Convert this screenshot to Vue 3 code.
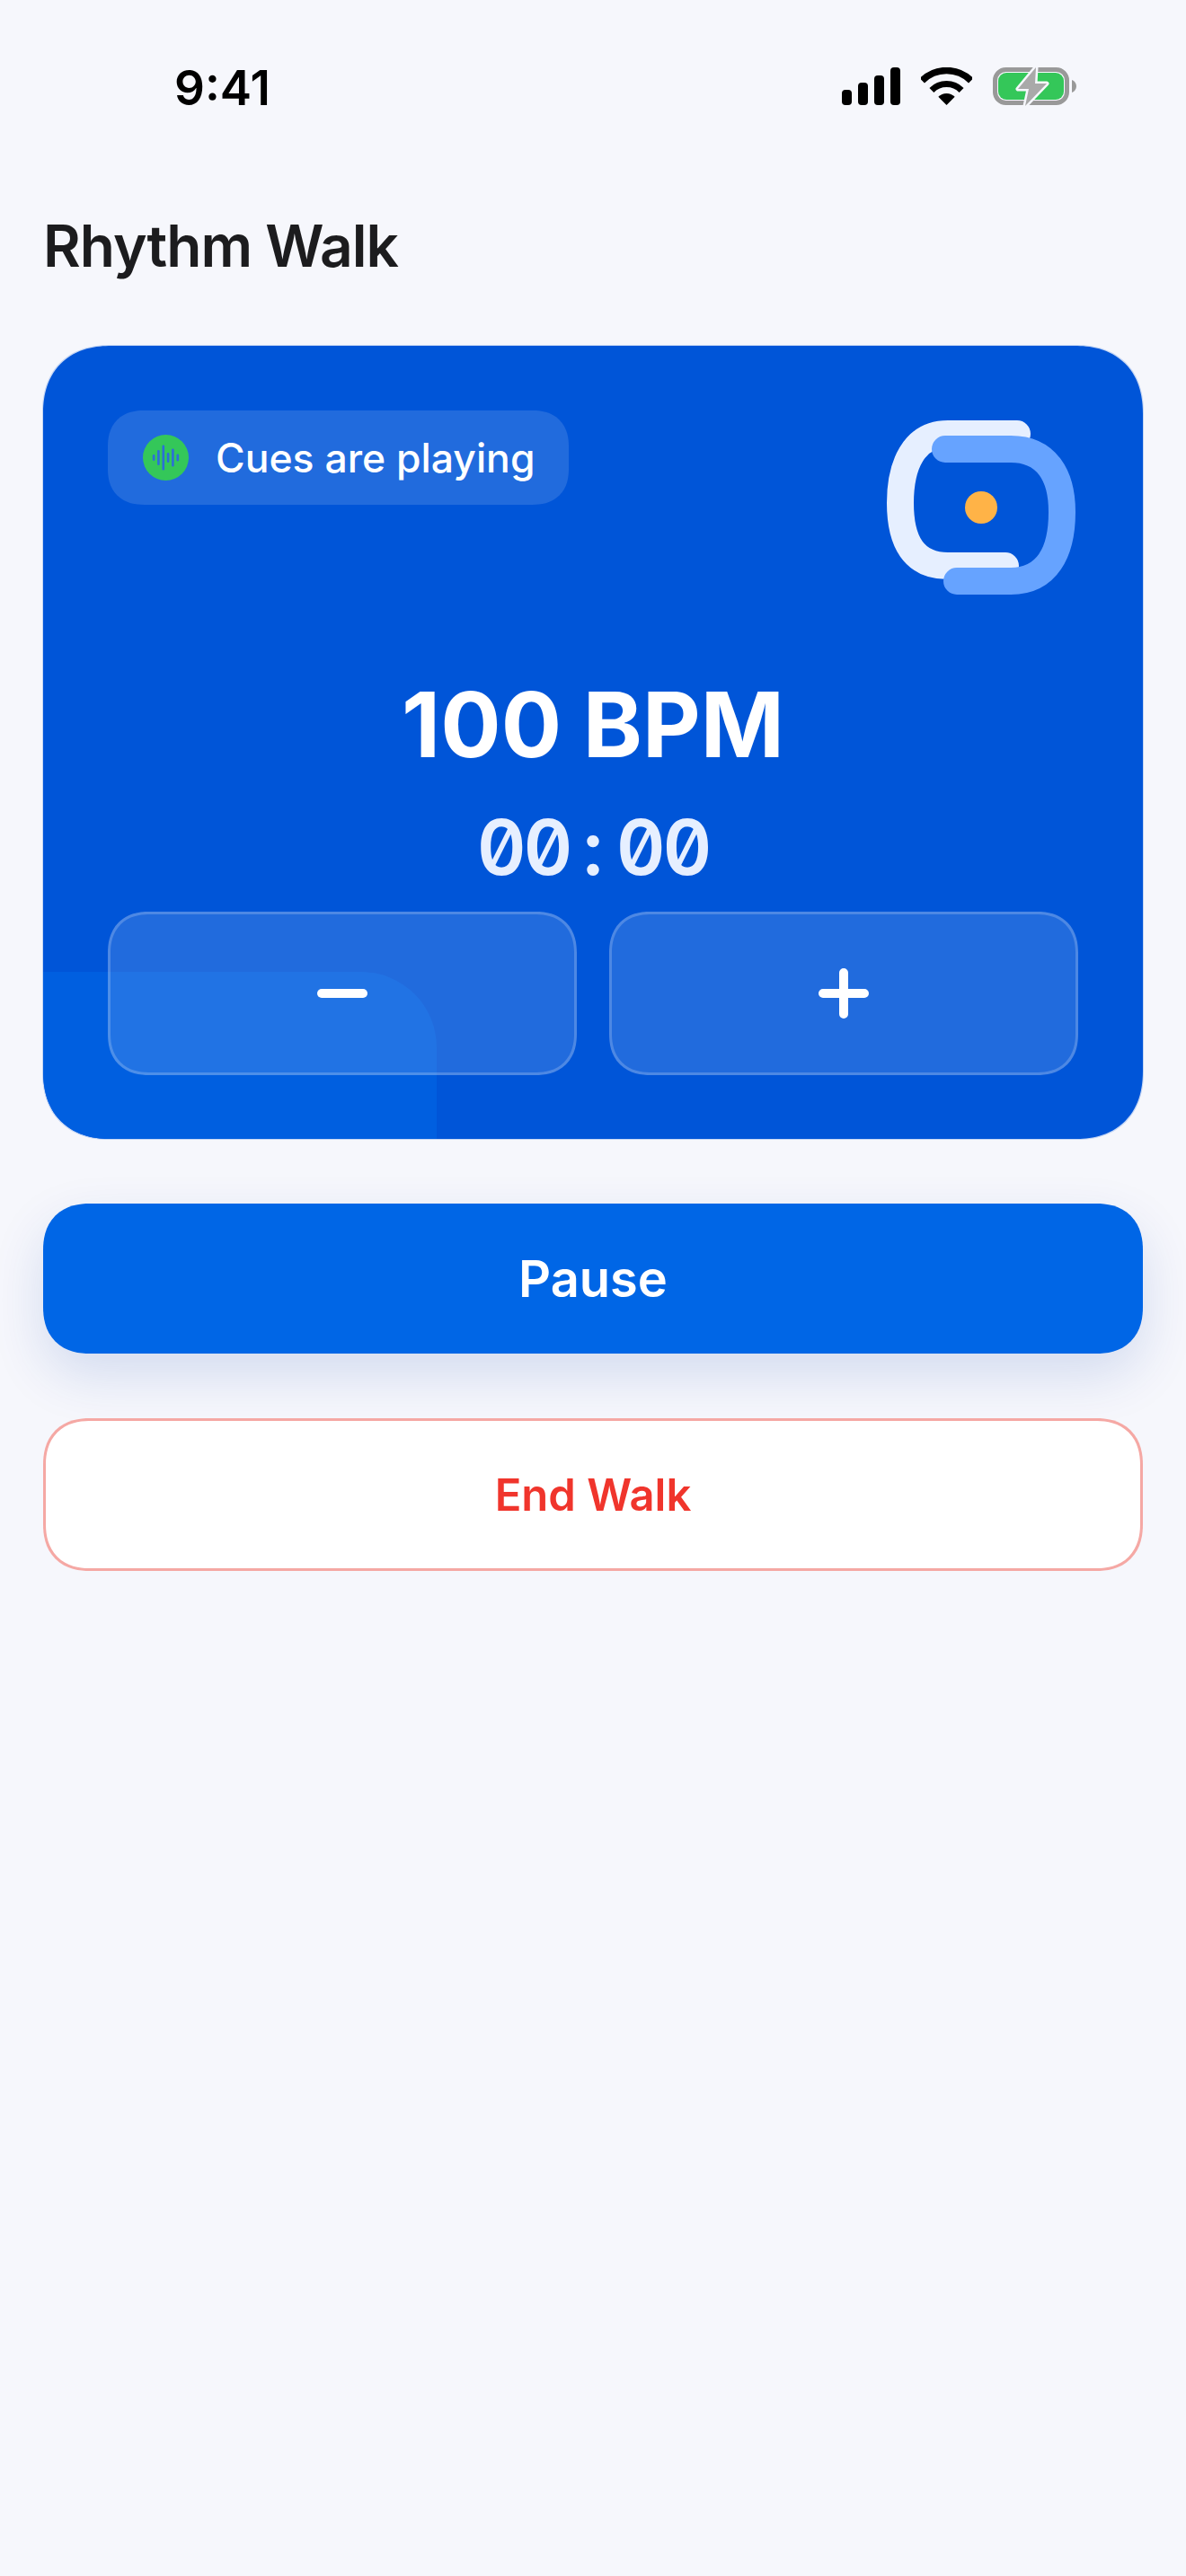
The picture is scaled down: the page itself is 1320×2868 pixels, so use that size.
<script setup>
const bars = [
  { x: 10.8, h: 7 },
  { x: 16.1, h: 17 },
  { x: 21.5, h: 28 },
  { x: 26.8, h: 11 },
  { x: 32.1, h: 20 },
  { x: 37.5, h: 8 },
]
const timerChars = '00:00'.split('')
</script>

<template>
  <div class="screen">
    <div class="status">
      <span class="time">9:41</span>
      <div class="status-icons">
        <svg class="signal" width="65" height="42" viewBox="0 0 65 42">
          <rect x="0" y="25" width="11" height="17" rx="4" />
          <rect x="18" y="17" width="11" height="25" rx="4" />
          <rect x="36" y="9" width="11" height="33" rx="4" />
          <rect x="54" y="0" width="11" height="42" rx="4" />
        </svg>
        <svg class="wifi" width="57" height="42" viewBox="0 0 57 42">
          <path d="M1.3 14.8A38.5 38.5 0 0 1 55.7 14.8" fill="none" stroke="#000" stroke-width="7.5" />
          <path d="M11.9 25.4A23.5 23.5 0 0 1 45.1 25.4" fill="none" stroke="#000" stroke-width="7" />
          <path d="M28.5 42L19.3 32.8A13 13 0 0 1 37.7 32.8Z" fill="#000" />
        </svg>
        <svg class="battery" width="93" height="44" viewBox="0 0 93 44">
          <rect x="2.5" y="2.5" width="80" height="37" rx="12" fill="none" stroke="#999" stroke-width="5" />
          <rect x="6" y="6" width="73" height="30" rx="9" fill="#34c759" />
          <path d="M88 14C91 15 93 18 93 21C93 24 91 27 88 28Z" fill="#999" />
          <path d="M48 0L28 24H40L36 43L60 18H47Z" fill="#a9a9a9" stroke="#f6f7fc" stroke-width="5" paint-order="stroke" stroke-linejoin="round" />
        </svg>
      </div>
    </div>

    <h1 class="title">Rhythm Walk</h1>

    <div class="card">
      <div class="card-glow"></div>
      <div class="card-top">
        <div class="pill">
          <svg class="pill-dot" width="51" height="51" viewBox="0 0 51 51">
            <circle cx="25.5" cy="25.5" r="25.5" fill="#34c759" />
            <rect
              v-for="bar in bars"
              :key="bar.x"
              :x="bar.x"
              :y="25.5 - bar.h / 2"
              width="2.6"
              :height="bar.h"
              rx="1.3"
              fill="#2b6fd8"
            />
          </svg>
          <span>Cues are playing</span>
        </div>
        <svg class="logo" width="210" height="194" viewBox="0 0 210 194">
          <path
            d="M145 15H68C30 15 15 50 15 92C15 135 30 162 68 162H132"
            fill="none"
            stroke="#e6efff"
            stroke-width="30"
            stroke-linecap="round"
          />
          <path
            d="M65 32H138C178 32 195 62 195 102C195 147 178 179 138 179H78"
            fill="none"
            stroke="#66a3ff"
            stroke-width="30"
            stroke-linecap="round"
          />
          <circle cx="105" cy="97" r="18" fill="#ffb347" />
        </svg>
      </div>

      <div class="bpm">100 BPM</div>
      <div class="timer">
        <span v-for="(ch, i) in timerChars" :key="i" class="timer-char">{{ ch }}</span>
      </div>

      <div class="steppers">
        <button class="stepper">
          <svg width="56" height="56" viewBox="0 0 56 56">
            <path d="M5 28H51" stroke="#fff" stroke-width="10" stroke-linecap="round" />
          </svg>
        </button>
        <button class="stepper">
          <svg width="56" height="56" viewBox="0 0 56 56">
            <path d="M5 28H51M28 5V51" stroke="#fff" stroke-width="10" stroke-linecap="round" />
          </svg>
        </button>
      </div>
    </div>

    <button class="pause">Pause</button>
    <button class="end">End Walk</button>
  </div>
</template>

<style>
html,
body {
  margin: 0;
  background: #f6f7fc;
}
</style>

<style scoped>
.screen {
  width: 1320px;
  height: 2868px;
  box-sizing: border-box;
  padding: 0 48px;
  background: #f6f7fc;
  font-family: Inter, "Liberation Sans", sans-serif;
  overflow: hidden;
}

.status {
  height: 165px;
  display: flex;
  justify-content: space-between;
  align-items: flex-start;
  padding: 65px 74px 0 146px;
  box-sizing: border-box;
}
.time {
  font-size: 53px;
  line-height: 66px;
  font-weight: 600;
  color: #000;
}
.status-icons {
  display: flex;
  align-items: flex-start;
  margin-top: 10px;
  gap: 23px;
}
.status-icons svg {
  display: block;
}

.title {
  margin: 0;
  height: 220px;
  padding-top: 69px;
  box-sizing: border-box;
  font-size: 64px;
  line-height: 80px;
  letter-spacing: -1px;
  font-weight: 600;
  color: #1c1c1e;
}

.card {
  position: relative;
  height: 883px;
  box-sizing: border-box;
  padding: 72px 72px 71px;
  border-radius: 76px;
  corner-shape: superellipse(1.2);
  background: #0055d8;
  overflow: hidden;
  display: flex;
  flex-direction: column;
  color: #fff;
  box-shadow: 0 0 0 1px rgba(0, 85, 216, 0.2);
}
.card-glow {
  position: absolute;
  left: 0;
  bottom: 0;
  width: 438px;
  height: 186px;
  border-top-right-radius: 84px;
  background: #005fe0;
}
.card-top {
  position: relative;
  display: flex;
  justify-content: space-between;
  align-items: flex-start;
  height: 205px;
}
.logo {
  display: block;
  margin: 11px 3px 0 0;
}
.pill {
  height: 105px;
  box-sizing: border-box;
  padding: 0 38px 0 39px;
  display: flex;
  align-items: center;
  gap: 30px;
  border-radius: 40px;
  corner-shape: superellipse(1.2);
  background: rgba(255, 255, 255, 0.13);
  font-size: 44.5px;
  font-weight: 500;
}
.pill-dot {
  display: block;
}

.bpm {
  position: relative;
  text-align: center;
  font-size: 100px;
  line-height: 124px;
  font-weight: 700;
  margin-top: 83px;
}
.timer {
  position: relative;
  display: flex;
  justify-content: center;
  font-size: 85px;
  line-height: 100px;
  font-weight: 600;
  font-feature-settings: "zero", "tnum";
  color: #e6efff;
  margin-top: 25px;
}
.timer-char {
  width: 51.7px;
  text-align: center;
}

.steppers {
  position: relative;
  margin-top: auto;
  display: grid;
  grid-template-columns: 1fr 1fr;
  gap: 36px;
}
.stepper {
  height: 182px;
  box-sizing: border-box;
  padding: 0;
  display: flex;
  align-items: center;
  justify-content: center;
  border: 3px solid rgba(255, 255, 255, 0.2);
  border-radius: 46px;
  corner-shape: superellipse(1.2);
  background: rgba(255, 255, 255, 0.13);
}
.stepper svg {
  display: block;
}

.pause,
.end {
  display: block;
  width: 100%;
  box-sizing: border-box;
  border-radius: 52px;
  corner-shape: superellipse(1.2);
  font-family: inherit;
}
.pause {
  height: 167px;
  margin-top: 72px;
  border: 0;
  background: #0066e6;
  color: #fff;
  font-size: 56px;
  font-weight: 600;
  box-shadow: 0 24px 60px rgba(0, 60, 160, 0.14);
}
.end {
  height: 170px;
  margin-top: 72px;
  border: 3px solid #f5a8a4;
  background: #fff;
  color: #f0352c;
  font-size: 49px;
  font-weight: 600;
}
</style>
